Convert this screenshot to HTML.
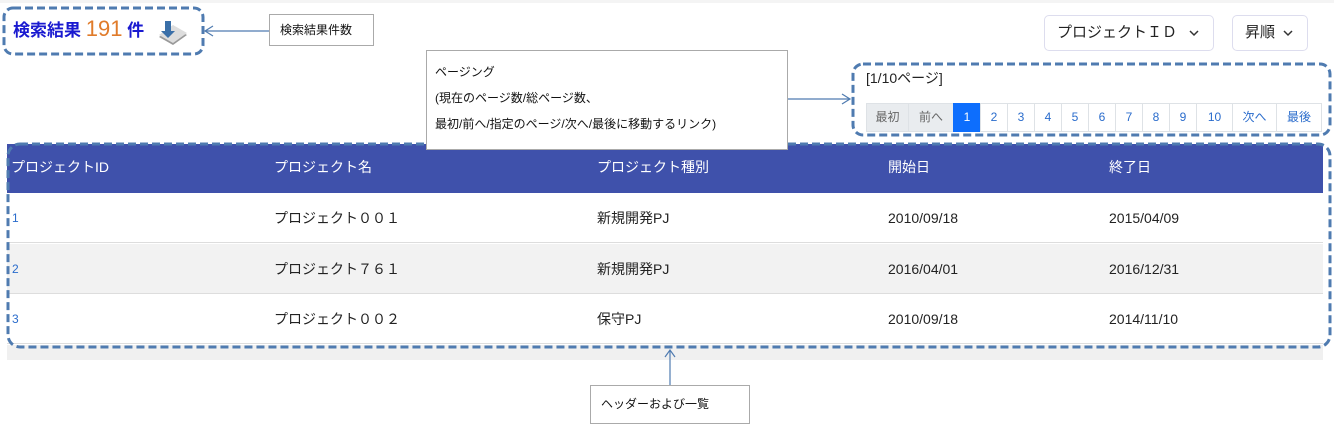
<!DOCTYPE html>
<html><head><meta charset="utf-8"><style>
*{margin:0;padding:0;box-sizing:border-box}
body{width:1334px;height:424px;background:#fff;position:relative;overflow:hidden;font-family:"Liberation Sans","Noto Sans CJK JP",sans-serif;color:#222}
.abs{position:absolute}
.hdr{left:7px;top:144px;width:1316px;height:49px;background:#3f51ab;color:#fff;font-size:14px}
.row{left:7px;width:1316px;height:50px;font-size:14px;border-bottom:1px solid #ddd}
.c{position:absolute;top:0;line-height:50px;white-space:nowrap}
.hdr .c{line-height:47px}
.id{color:#2a6ccc;font-size:12px}
.dd{border:1px solid #dde;border-radius:5px;height:36px;top:15px;font-size:15px;line-height:34px;padding-left:12px;color:#222}
.dd svg{position:absolute;right:14px;top:14px}
.pg{top:103px;height:29px;display:flex;left:866px;font-size:12px}
.pg div{border:1px solid #dee2e6;margin-left:-1px;text-align:center;line-height:27px;color:#2a6ccc}
.call{border:1px solid #aaa;background:#fff;font-size:12px;color:#111}
</style></head><body>
<div class="abs" style="left:0;top:0;width:1334px;height:3px;background:#f4f4f4"></div>
<div class="abs" style="left:13px;top:16px;font-size:17px;font-weight:bold;color:#1a1ad0;white-space:nowrap">検索結果 <span style="color:#e07b2a;font-weight:normal;font-size:22px">191</span> 件</div>
<svg class="abs" style="left:157px;top:19px" width="32" height="28"><polygon points="2,18 16,8 30,16 16,26" fill="#999"/><polygon points="2,16 16,6 30,14 16,24" fill="#ddd"/><path d="M8,2 L8,12 L4,12 L11,19 L18,12 L14,12 L14,2Z" fill="#3a6fa8"/></svg>

<div class="abs dd" style="left:1044px;width:170px">プロジェクトＩＤ<svg width="10" height="7"><path d="M1,1 L5,5 L9,1" fill="none" stroke="#333" stroke-width="1.5"/></svg></div>
<div class="abs dd" style="left:1232px;width:76px">昇順<svg width="10" height="7"><path d="M1,1 L5,5 L9,1" fill="none" stroke="#333" stroke-width="1.5"/></svg></div>

<div class="abs" style="left:866px;top:68px;font-size:14px">[1/10ページ]</div>
<div class="abs pg">
<div style="width:43px;background:#e9ecef;color:#666;margin-left:0">最初</div>
<div style="width:46px;background:#e9ecef;color:#666">前へ</div>
<div style="width:28px;background:#0d6efd;border-color:#0d6efd;color:#fff">1</div>
<div style="width:28px">2</div><div style="width:28px">3</div><div style="width:28px">4</div><div style="width:28px">5</div><div style="width:28px">6</div><div style="width:28px">7</div><div style="width:28px">8</div><div style="width:28px">9</div>
<div style="width:37px">10</div><div style="width:45px">次へ</div><div style="width:46px">最後</div>
</div>

<div class="abs hdr"><span class="c" style="left:4px">プロジェクトID</span><span class="c" style="left:267px">プロジェクト名</span><span class="c" style="left:590px">プロジェクト種別</span><span class="c" style="left:881px">開始日</span><span class="c" style="left:1102px">終了日</span></div>
<div class="abs row" style="top:193px;background:#fff"><span class="c id" style="left:5px">1</span><span class="c" style="left:267px">プロジェクト００１</span><span class="c" style="left:590px">新規開発PJ</span><span class="c" style="left:881px">2010/09/18</span><span class="c" style="left:1102px">2015/04/09</span></div>
<div class="abs row" style="top:244px;background:#f2f2f2"><span class="c id" style="left:5px">2</span><span class="c" style="left:267px">プロジェクト７６１</span><span class="c" style="left:590px">新規開発PJ</span><span class="c" style="left:881px">2016/04/01</span><span class="c" style="left:1102px">2016/12/31</span></div>
<div class="abs row" style="top:294px;background:#fff"><span class="c id" style="left:5px">3</span><span class="c" style="left:267px">プロジェクト００２</span><span class="c" style="left:590px">保守PJ</span><span class="c" style="left:881px">2010/09/18</span><span class="c" style="left:1102px">2014/11/10</span></div>
<div class="abs" style="left:7px;top:345px;width:1316px;height:15px;background:#f0f0f0"></div>

<svg class="abs" style="left:0;top:0" width="1334" height="424">
<g fill="none" stroke="#4f7bb0" stroke-width="3" stroke-dasharray="8 4">
<rect x="4" y="8" width="199" height="46" rx="9"/>
<rect x="853" y="64" width="477" height="71" rx="10"/>
<rect x="8" y="144" width="1322" height="203" rx="12"/>
</g>
<g fill="none" stroke="#4f7bb0" stroke-width="1.2">
<path d="M205,31 H269 M213,26 L205,31 L213,36"/>
<path d="M787,99 H850 M842,94 L850,99 L842,104"/>
<path d="M670,350 V385 M665,357 L670,350 L675,357"/>
</g>
</svg>
<div class="abs call" style="left:269px;top:14px;width:105px;height:32px;line-height:30px;padding-left:10px">検索結果件数</div>
<div class="abs call" style="left:426px;top:50px;width:362px;height:100px;padding:8px 0 0 8px;line-height:26px">ページング<br>(現在のページ数/総ページ数、<br>最初/前へ/指定のページ/次へ/最後に移動するリンク)</div>
<div class="abs call" style="left:590px;top:385px;width:160px;height:39px;line-height:37px;padding-left:10px">ヘッダーおよび一覧</div>
</body></html>
